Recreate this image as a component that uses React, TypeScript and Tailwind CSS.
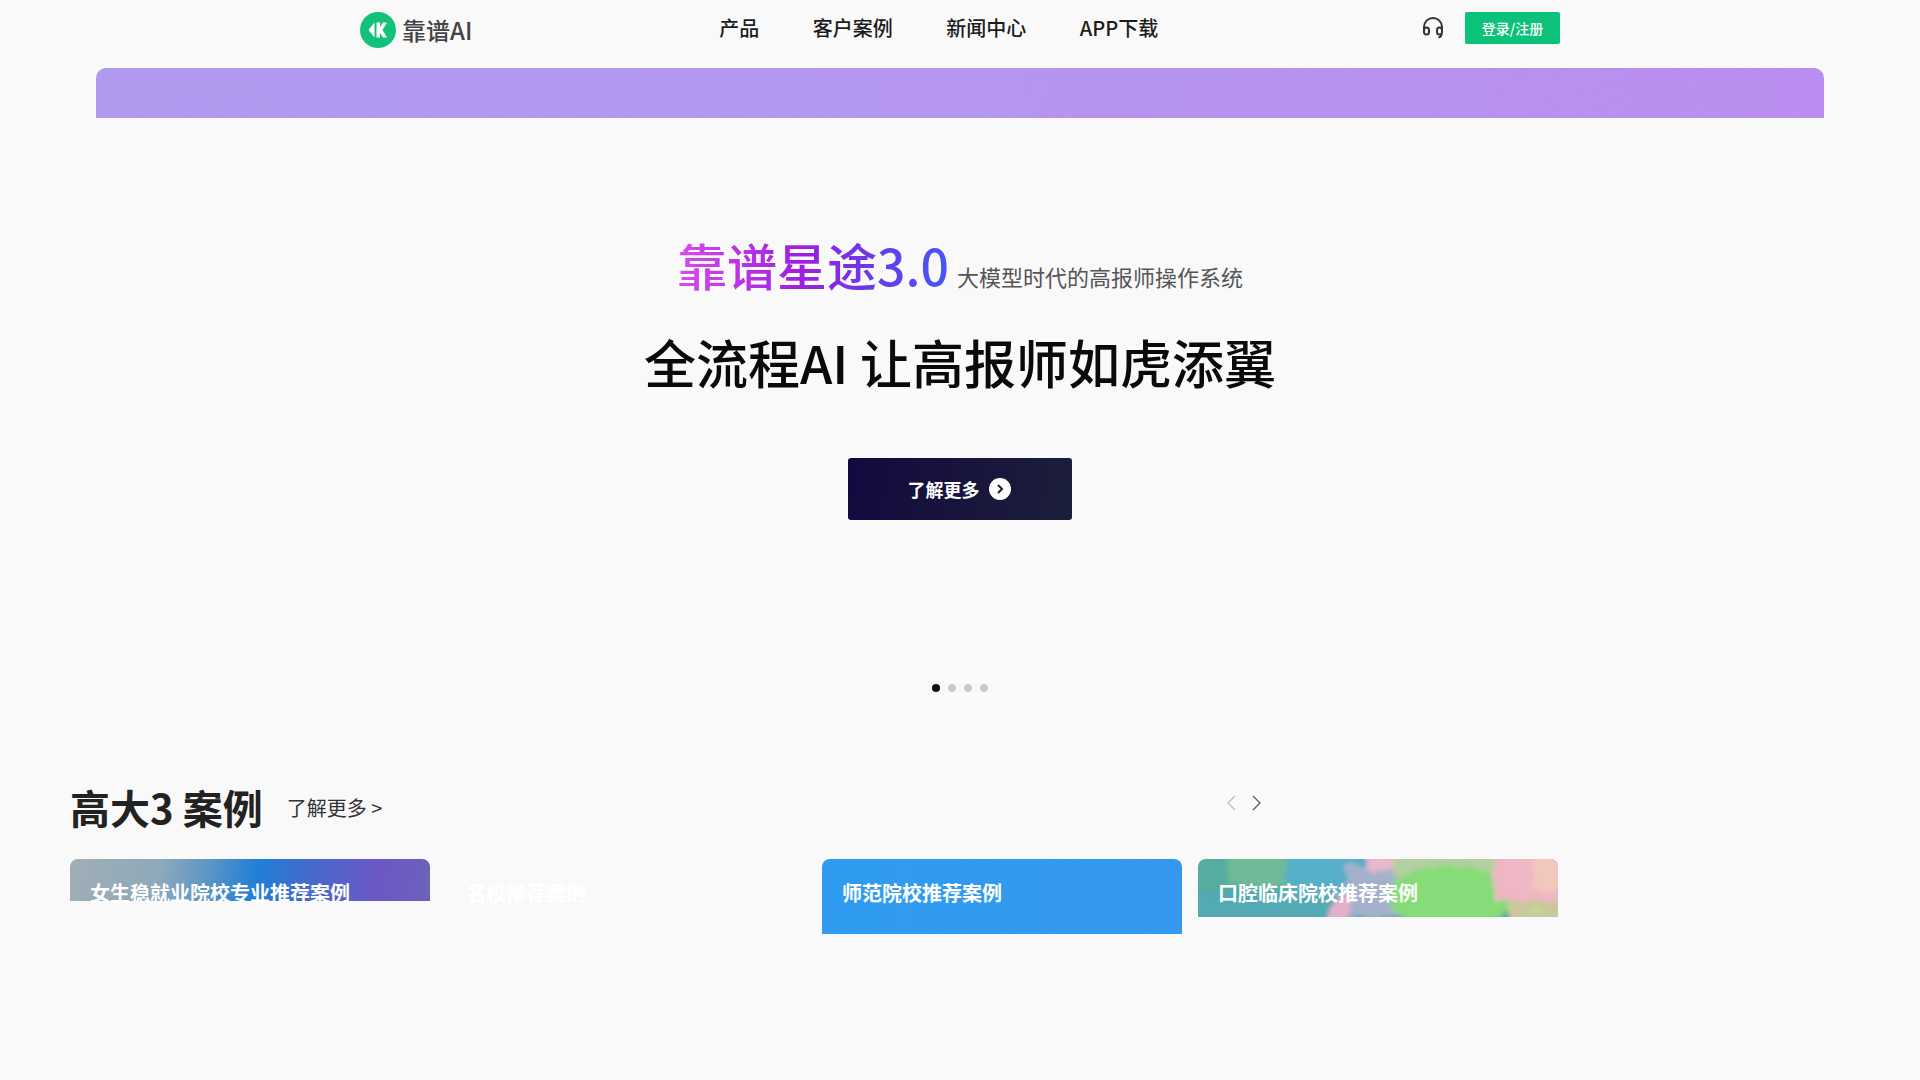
const navItems = ["产品", "客户案例", "新闻中心", "APP下载"];

const cases = [
  {
    title: "女生稳就业院校专业推荐案例",
    bg: "bg-[linear-gradient(100deg,#a0aeb6_0%,#8ea9bb_25%,#5c97c6_38%,#1f7ed6_52%,#4a68cc_68%,#6b58c6_85%,#6c62bb_100%)] bg-[length:100%_42px]",
  },
  { title: "名校推荐案例", bg: "" },
  { title: "师范院校推荐案例", bg: "bg-[linear-gradient(90deg,#2f9cf0,#3498ee)] bg-[length:100%_75px]" },
  { title: "口腔临床院校推荐案例", bg: "", painted: true },
];

function Logo() {
  return (
    <div className="flex items-center gap-[6px]">
      <svg width="36" height="36" viewBox="0 0 36 36">
        <circle cx="18" cy="18" r="18" fill="#12c27b" />
        <path d="M14.5 10.5 L8.5 18 L14.5 25.5 Z" fill="#fff" />
        <path d="M16.5 10.5 H20 V15 L23 10.5 H27 L22.5 18 L27 25.5 H23 L20 21 V25.5 H16.5 Z" fill="#fff" />
      </svg>
      <span className="text-[24px] leading-none font-medium text-[#444]">靠谱AI</span>
    </div>
  );
}

function Headset() {
  return (
    <svg width="22" height="22" viewBox="0 0 22 22" fill="none" stroke="#333" strokeWidth="2">
      <path d="M2 14 V10 a9 9 0 0 1 18 0 V14" />
      <rect x="2" y="10.5" width="5" height="7" rx="2.5" />
      <rect x="15" y="10.5" width="5" height="7" rx="2.5" />
      <path d="M19.5 17 q0 3 -3 3.5" />
    </svg>
  );
}

// faint grain, the photos behind these boxes are not flat colour
function Grain() {
  return (
    <svg className="pointer-events-none absolute inset-0 h-full w-full opacity-[0.08]">
      <filter id="grain">
        <feTurbulence type="fractalNoise" baseFrequency="0.7" numOctaves="2" seed="4" />
        <feColorMatrix values="0 0 0 0 0.2  0 0 0 0 0.1  0 0 0 0 0.4  0 0 0 1.4 -0.4" />
      </filter>
      <rect width="100%" height="100%" filter="url(#grain)" />
    </svg>
  );
}

function PaintedBackground() {
  return (
    <svg className="absolute top-0 left-0 rounded-t-[8px]" width="360" height="58" viewBox="0 0 360 58">
      <filter id="paint" x="-10%" y="-10%" width="120%" height="120%">
        <feTurbulence type="fractalNoise" baseFrequency="0.09" numOctaves="3" seed="7" />
        <feDisplacementMap in="SourceGraphic" scale="10" />
        <feGaussianBlur stdDeviation="2" />
      </filter>
      <rect width="360" height="58" fill="#56ad9f" />
      <g filter="url(#paint)">
        <rect x="-10" y="32" width="150" height="36" fill="#52a9b4" />
        <rect x="30" y="-8" width="60" height="34" fill="#6fba98" />
        <rect x="88" y="-8" width="80" height="44" fill="#56aec8" />
        <rect x="148" y="6" width="62" height="52" fill="#a4b0cc" />
        <rect x="168" y="-8" width="28" height="20" fill="#e8b8cc" />
        <path d="M124 66 L140 34 L156 34 L148 66 Z" fill="#e4b0c8" />
        <rect x="196" y="-8" width="110" height="26" fill="#b4cfa0" />
        <ellipse cx="252" cy="38" rx="62" ry="32" fill="#86dc78" />
        <rect x="296" y="-8" width="74" height="50" fill="#efb6c4" />
        <rect x="335" y="-8" width="30" height="40" fill="#f3c8bc" />
        <rect x="310" y="42" width="55" height="24" fill="#c8c89c" />
        <ellipse cx="338" cy="52" rx="8" ry="4" fill="#c4d88c" />
      </g>
    </svg>
  );
}

export default function App() {
  return (
    <div className="min-h-[1080px] overflow-hidden bg-[#f9f9fa] font-['Noto_Sans_CJK_SC','Noto_Sans',sans-serif]">
      <header className="mx-auto flex h-[68px] w-[1200px] items-start pt-[12px]">
        <Logo />
        <nav className="mt-[6px] ml-[247px] flex gap-[53.5px] text-[20px] leading-[20px] font-medium text-[#1c1c1c]">
          {navItems.map((item) => (
            <a key={item}>{item}</a>
          ))}
        </nav>
        <div className="ml-auto flex items-center gap-[21px]">
          <Headset />
          <button className="h-[32px] w-[95px] rounded-[2px] bg-[#0cc27a] text-[14px] font-medium text-white">
            登录/注册
          </button>
        </div>
      </header>

      <div className="relative mx-[96px] h-[50px] overflow-hidden rounded-t-[10px] bg-[linear-gradient(90deg,#b29cf2,#b698f2_50%,#bc90f2)]">
        <Grain />
      </div>

      <section className="flex flex-col items-center pt-[109px]">
        <div className="flex items-baseline gap-[8px]">
          <span className="bg-[linear-gradient(90deg,#d84cea_0%,#a01ee0_45%,#6c38e8_70%,#4658f4_100%)] bg-clip-text text-[50px] leading-[74px] font-medium text-transparent">
            靠谱星途3.0
          </span>
          <span className="text-[22px] text-[#555]">大模型时代的高报师操作系统</span>
        </div>
        <h1 className="mt-[23px] text-[52px] leading-[76px] font-medium text-[#0a0a0a]">
          全流程AI 让高报师如虎添翼
        </h1>
        <button className="mt-[58px] flex h-[62px] w-[224px] items-center justify-center gap-[9px] rounded-[3px] bg-[linear-gradient(100deg,#14093f,#1c1f3a)] pr-[2px] text-[18px] font-bold text-white">
          了解更多
          <svg width="22" height="22" viewBox="0 0 22 22">
            <circle cx="11" cy="11" r="11" fill="#fff" />
            <path d="M9 7 L13 11 L9 15" fill="none" stroke="#222" strokeWidth="2" />
          </svg>
        </button>
        <div className="mt-[164px] flex gap-[8px]">
          <span className="size-[8px] rounded-full bg-[#111]" />
          <span className="size-[8px] rounded-full bg-[#c8c8c8]" />
          <span className="size-[8px] rounded-full bg-[#c8c8c8]" />
          <span className="size-[8px] rounded-full bg-[#c8c8c8]" />
        </div>
      </section>

      <section className="mt-[86px] ml-[70px] w-[1488px]">
        <div className="flex w-[1193px] items-center">
          <h2 className="text-[40px] leading-[58px] font-bold text-[#222]">高大3 案例</h2>
          <a className="mt-[2px] ml-[24px] text-[20px] text-[#333]">了解更多 &gt;</a>
          <div className="mt-[-8px] ml-auto flex gap-[10px]">
            <svg width="14" height="18" viewBox="0 0 14 18" fill="none" stroke="#bbb" strokeWidth="1.2">
              <path d="M10 2 L3 9 L10 16" />
            </svg>
            <svg width="14" height="18" viewBox="0 0 14 18" fill="none" stroke="#555" strokeWidth="1.2">
              <path d="M4 2 L11 9 L4 16" />
            </svg>
          </div>
        </div>
        <div className="mt-[23px] flex gap-[16px]">
          {cases.map((c) => (
            <div
              key={c.title}
              className={`relative h-[75px] w-[360px] rounded-t-[8px] bg-no-repeat px-[20px] pt-[19px] ${c.bg}`}
            >
              {c.painted && <PaintedBackground />}
              <span className="relative text-[20px] leading-[30px] font-bold text-white">{c.title}</span>
            </div>
          ))}
        </div>
      </section>
    </div>
  );
}
